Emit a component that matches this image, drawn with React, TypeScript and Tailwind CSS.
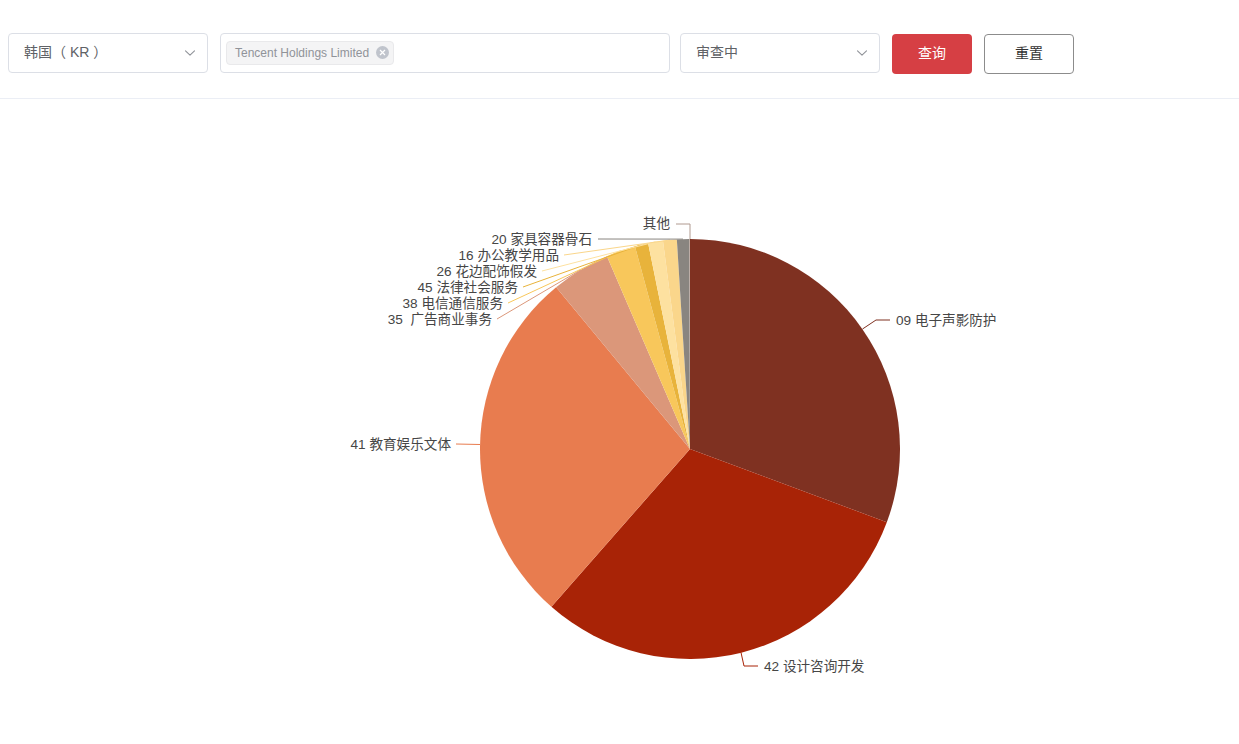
import React from "react";

const CX = 690;
const CY = 449;
const R = 210;

interface Slice {
  name: string;
  from: number;
  to: number;
  color: string;
}

const slices: Slice[] = [
  { name: "09", from: 0, to: 110.4, color: "#7f3121" },
  { name: "42", from: 110.4, to: 221.3, color: "#a82306" },
  { name: "41", from: 221.3, to: 320.4, color: "#e87c4f" },
  { name: "35", from: 320.4, to: 336.7, color: "#db977a" },
  { name: "38", from: 336.7, to: 344.8, color: "#f8c75b" },
  { name: "45", from: 344.8, to: 348.5, color: "#e8b33b" },
  { name: "26", from: 348.5, to: 352.6, color: "#fde1a0" },
  { name: "16", from: 352.6, to: 356.4, color: "#fad68b" },
  { name: "20", from: 356.4, to: 359.8, color: "#898580" },
  { name: "other", from: 359.8, to: 360, color: "#b09a90" },
];

// angle measured clockwise from 12 o'clock
function pt(deg: number, r: number = R): [number, number] {
  const a = (deg * Math.PI) / 180;
  return [CX + r * Math.sin(a), CY - r * Math.cos(a)];
}

function arcPath(from: number, to: number) {
  const [x1, y1] = pt(from);
  const [x2, y2] = pt(to);
  const large = to - from > 180 ? 1 : 0;
  return `M ${CX} ${CY} L ${x1} ${y1} A ${R} ${R} 0 ${large} 1 ${x2} ${y2} Z`;
}

const labels: { text: string; x: number; y: number; anchor: "start" | "end"; points: string; color: string }[] = [
  { text: "09 电子声影防护", x: 896, y: 320, anchor: "start", points: "862.5,329 876,320 890,320", color: "#7f3121" },
  { text: "42 设计咨询开发", x: 764, y: 666, anchor: "start", points: "741,652.5 744,666 758,666", color: "#a82306" },
  { text: "41 教育娱乐文体", x: 451, y: 444, anchor: "end", points: "480,444.5 456,444", color: "#e87c4f" },
  { text: "35  广告商业事务", x: 492, y: 319, anchor: "end", points: "580.3,270 497,319", color: "#db977a" },
  { text: "38 电信通信服务", x: 503, y: 303, anchor: "end", points: "620.8,250.7 508,303", color: "#f8c75b" },
  { text: "45 法律社会服务", x: 518, y: 287, anchor: "end", points: "641.5,244.7 523,287", color: "#e8b33b" },
  { text: "26 花边配饰假发", x: 537, y: 271, anchor: "end", points: "655.5,241.8 542,271", color: "#fde1a0" },
  { text: "16 办公教学用品", x: 559, y: 255, anchor: "end", points: "669.9,240 564,255", color: "#fad68b" },
  { text: "20 家具容器骨石", x: 592, y: 239, anchor: "end", points: "683,239.1 598,239", color: "#898580" },
  { text: "其他", x: 670, y: 223, anchor: "end", points: "690,239 690,224 676,224", color: "#b09a90" },
];

function Chevron() {
  return (
    <svg width="12" height="12" viewBox="0 0 12 12" fill="none" className="text-[#909399]">
      <path d="M1.5 3.8 L6 8.2 L10.5 3.8" stroke="currentColor" strokeWidth="1.1" strokeLinecap="round" strokeLinejoin="round" />
    </svg>
  );
}

function Select({ value, className }: { value: string; className?: string }) {
  return (
    <div
      className={`flex h-10 w-[200px] items-center justify-between rounded border border-[#dcdfe6] bg-white pl-[15px] pr-[11px] ${className ?? ""}`}
    >
      <span className="whitespace-pre text-[14px] text-[#606266]">{value}</span>
      <Chevron />
    </div>
  );
}

function PieChart() {
  return (
    <svg width="1239" height="645" viewBox="0 99 1239 645" className="block">
      {slices.map((s) => (
        <path key={s.name} d={arcPath(s.from, s.to)} fill={s.color} />
      ))}
      {labels.map((l) => (
        <g key={l.text}>
          <polyline points={l.points} fill="none" stroke={l.color} strokeWidth="1" />
          <text
            x={l.x}
            y={l.y}
            textAnchor={l.anchor}
            dominantBaseline="central"
            fontSize="13.6"
            fill="#464646"
            style={{ whiteSpace: "pre" }}
          >
            {l.text}
          </text>
        </g>
      ))}
    </svg>
  );
}

export default function App() {
  return (
    <div
      className="h-[744px] w-[1239px] overflow-hidden bg-white"
      style={{ fontFamily: '"Liberation Sans", "Noto Sans CJK SC", sans-serif' }}
    >
      {/* filter bar */}
      <div className="flex h-[99px] items-center border-b border-[#ebeef5] pl-2 pt-[7px]">
        <Select value="韩国（ KR ）" />

        <div className="ml-[12px] flex h-10 w-[450px] items-center rounded border border-[#dcdfe6] bg-white px-[5px]">
          <span className="flex h-6 items-center gap-[7px] rounded border border-[#e9e9eb] bg-[#f4f4f5] pl-[8px] pr-[4px] text-[12px] text-[#909399]">
            Tencent Holdings Limited
            <span className="flex h-[13px] w-[13px] items-center justify-center rounded-full bg-[#c0c4cc]">
              <svg width="7" height="7" viewBox="0 0 7 7">
                <path d="M1 1 L6 6 M6 1 L1 6" stroke="#fff" strokeWidth="1.2" />
              </svg>
            </span>
          </span>
        </div>

        <Select value="审查中" className="ml-[10px]" />

        <button className="ml-[12px] mt-[2px] h-10 w-20 rounded bg-[#d63f44] text-[14px] text-white">
          查询
        </button>
        <button className="ml-[12px] mt-[2px] h-10 w-[90px] rounded border border-[#8c8c8c] bg-white text-[14px] text-[#333]">
          重置
        </button>
      </div>

      <PieChart />
    </div>
  );
}
